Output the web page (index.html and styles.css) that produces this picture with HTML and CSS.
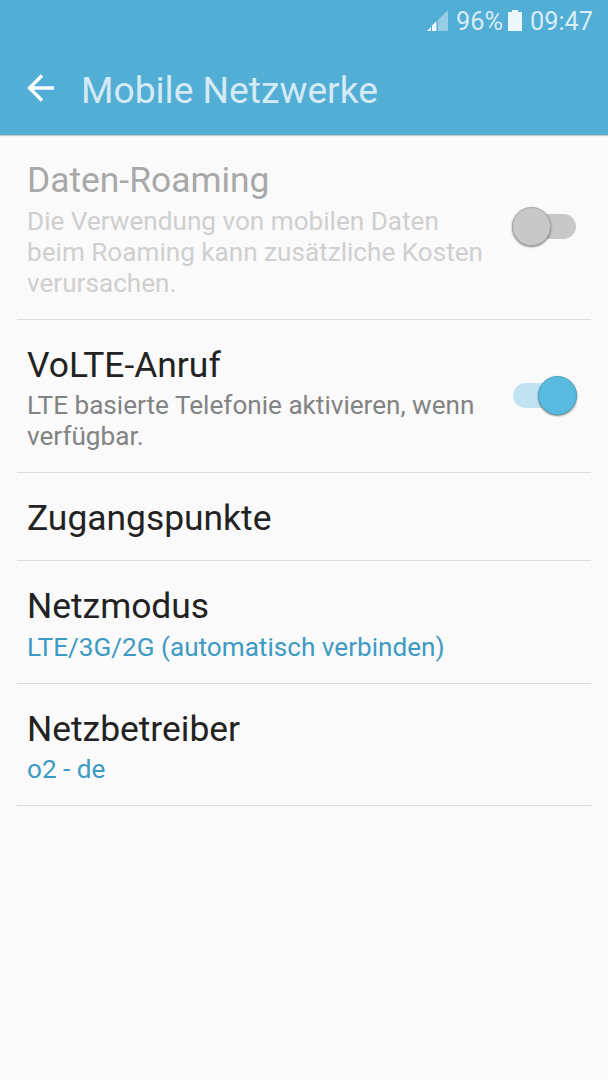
FILE: index.html
```html
<!DOCTYPE html>
<html lang="de">
<head>
    <meta charset="UTF-8">
    <meta name="viewport" content="width=device-width, initial-scale=1.0">
    <title>Mobile Netzwerke</title>
    <link rel="stylesheet" href="styles.css">
</head>
<body>
    <header class="header">
        <div class="status-bar">
            <svg class="signal" width="21" height="21" viewBox="0 0 21 21">
                <path d="M11 10L21 0V21H11Z" fill="#97cee6"/>
                <path d="M5 15.5L9.5 11V21H5ZM4 17V21H0Z" fill="#edf6fa"/>
            </svg>
            <span class="percent">96%</span>
            <svg class="battery" width="14" height="21" viewBox="0 0 14 21">
                <path d="M4 0H10V2H14V21H0V2H4Z" fill="#edf6fa"/>
            </svg>
            <span class="time">09:47</span>
        </div>
        <div class="title-bar">
            <svg class="back" width="27" height="28" viewBox="0 0 27 28">
                <path d="M15 1.5L2.5 14L15 26.5M2.5 14H27" fill="none" stroke="#fff" stroke-width="3.4"/>
            </svg>
            <h1>Mobile Netzwerke</h1>
        </div>
    </header>
    <main class="list">
        <div class="item disabled">
            <div class="text">
                <h2>Daten-Roaming</h2>
                <p>Die Verwendung von mobilen Daten<br>beim Roaming kann zusätzliche Kosten<br>verursachen.</p>
            </div>
            <div class="switch"><span class="knob"></span></div>
        </div>
        <div class="item">
            <div class="text">
                <h2>VoLTE-Anruf</h2>
                <p>LTE basierte Telefonie aktivieren, wenn<br>verfügbar.</p>
            </div>
            <div class="switch on"><span class="knob"></span></div>
        </div>
        <div class="item single">
            <h2>Zugangspunkte</h2>
        </div>
        <div class="item">
            <div class="text">
                <h2>Netzmodus</h2>
                <p class="value">LTE/3G/2G (automatisch verbinden)</p>
            </div>
        </div>
        <div class="item">
            <div class="text">
                <h2>Netzbetreiber</h2>
                <p class="value">o2 - de</p>
            </div>
        </div>
    </main>
</body>
</html>
```
FILE: styles.css
```css
* {
    box-sizing: border-box;
}

body {
    margin: 0;
    font-family: Roboto, sans-serif;
    background: #fafafa;
    color: #222;
}

h1, h2, p {
    margin: 0;
    font-weight: 400;
    white-space: nowrap;
}

.header {
    height: 135px;
    background: #52aed5;
    color: #fff;
    box-shadow: 0 1px 1px rgba(0, 0, 0, 0.2);
}

.status-bar {
    display: flex;
    align-items: center;
    justify-content: flex-end;
    height: 43px;
    padding-right: 15px;
    font-size: 25.3px;
    color: #d9edf6;
}

.signal, .battery {
    margin-bottom: 2px;
}

.percent {
    margin-left: 8px;
}

.battery {
    margin-left: 5px;
    margin-right: 8px;
}

.title-bar {
    display: flex;
    align-items: center;
    height: 92px;
    padding-left: 27px;
}

.back {
    margin-top: -3px;
}

h1 {
    margin-left: 27px;
    padding-top: 1px;
    font-size: 37.2px;
    color: #d4eaf4;
}

.list {
    padding: 0 17px;
}

.item {
    display: flex;
    justify-content: space-between;
    align-items: center;
    padding: 23px 14px 20px 10px;
    border-bottom: 1px solid #dcdcdc;
}

h2 {
    font-size: 35.4px;
    line-height: 44px;
}

p {
    padding-top: 3.5px;
    font-size: 26.13px;
    line-height: 31px;
    color: #828383;
}

.value {
    color: #3d9ac2;
}

.disabled h2 {
    color: #a8a8a8;
}

.disabled p {
    color: #cfcfcf;
}

.single {
    height: 88px;
    padding-top: 22px;
}

.switch {
    display: flex;
    align-items: center;
    width: 64px;
    height: 25px;
    margin: 0 1px 4px 0;
    border-radius: 13px;
    background: #c8c8c8;
}

.knob {
    flex: none;
    width: 39px;
    height: 39px;
    border-radius: 50%;
    background: #c8c8c8;
    border: 1px solid #aaa;
    box-shadow: 0 1px 2px rgba(0, 0, 0, 0.5);
}

.on {
    justify-content: flex-end;
    margin-right: 0;
    background: #c1e3f1;
}

.on .knob {
    background: #58badf;
    border-color: #4ba5c8;
}
```
